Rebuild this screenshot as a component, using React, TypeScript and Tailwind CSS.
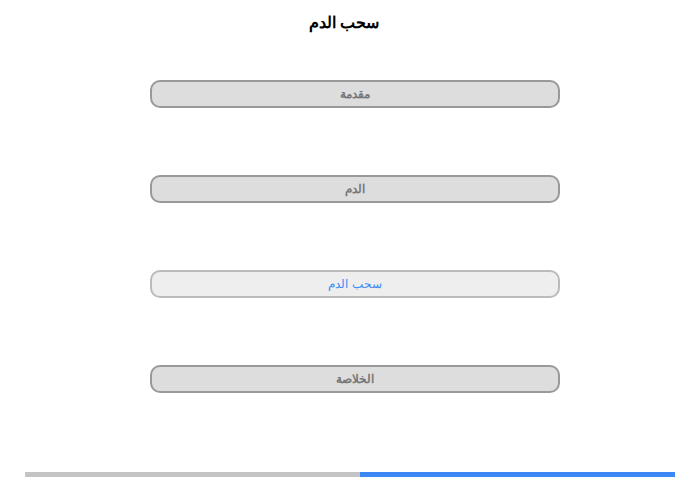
const sections = [
  { label: "مقدمة", active: false },
  { label: "الدم", active: false },
  { label: "سحب الدم", active: true },
  { label: "الخلاصة", active: false },
];

export default function App() {
  return (
    <div
      dir="rtl"
      className="w-[700px] h-[480px] bg-white flex flex-col font-['Liberation_Sans',sans-serif]"
    >
      <div className="h-[45px] pr-[12px] flex items-center justify-center text-[16px] font-bold text-black">
        سحب الدم
      </div>
      <div className="mt-[35px] pl-[10px] flex flex-col items-center gap-[67px]">
        {sections.map((s) => (
          <div
            key={s.label}
            className={`w-[410px] h-[28px] rounded-[10px] border-2 flex items-center justify-center text-[12px] ${
              s.active
                ? "bg-[#eeeeee] border-[#bbbbbb] text-[#3b8bf5]"
                : "bg-[#dddddd] border-[#999999] text-[#777777] font-bold"
            }`}
          >
            {s.label}
          </div>
        ))}
      </div>
      <div dir="ltr" className="mt-auto mb-[3px] mx-[25px] h-[5px] flex">
        <div className="w-[335px] bg-[#c4c4c4]" />
        <div className="flex-1 bg-[#3b87f5]" />
      </div>
    </div>
  );
}
